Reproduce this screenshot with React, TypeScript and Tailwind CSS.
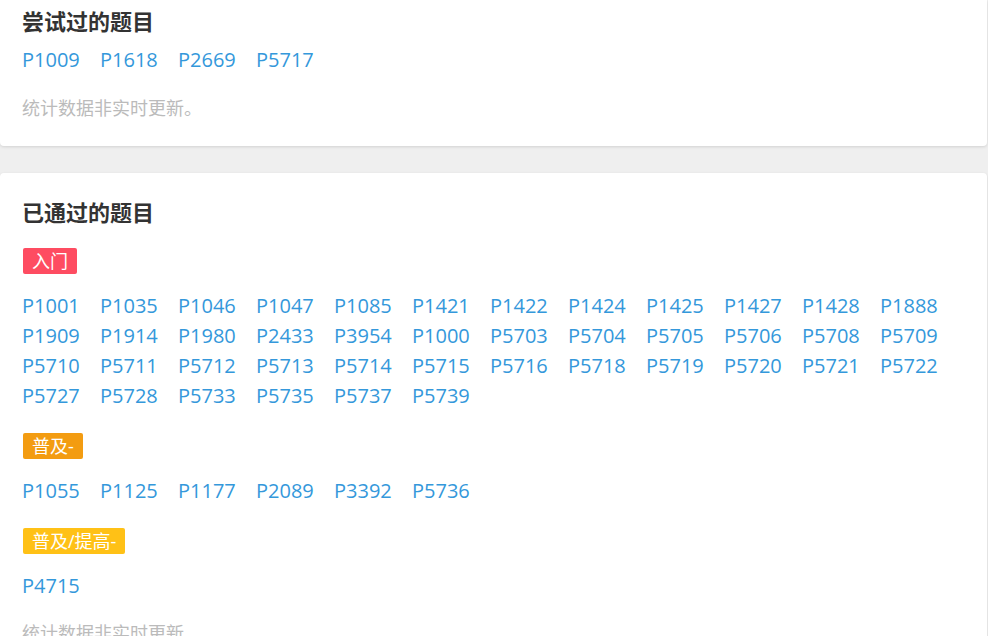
const font = { fontFamily: '"Open Sans", "Noto Sans CJK SC", sans-serif' }

const tried = ['P1009', 'P1618', 'P2669', 'P5717']

const passed = [
  {
    label: '入门',
    color: 'bg-[#fe4c61]',
    items: [
      'P1001', 'P1035', 'P1046', 'P1047', 'P1085', 'P1421', 'P1422', 'P1424', 'P1425', 'P1427', 'P1428', 'P1888',
      'P1909', 'P1914', 'P1980', 'P2433', 'P3954', 'P1000', 'P5703', 'P5704', 'P5705', 'P5706', 'P5708', 'P5709',
      'P5710', 'P5711', 'P5712', 'P5713', 'P5714', 'P5715', 'P5716', 'P5718', 'P5719', 'P5720', 'P5721', 'P5722',
      'P5727', 'P5728', 'P5733', 'P5735', 'P5737', 'P5739',
    ],
  },
  {
    label: '普及-',
    color: 'bg-[#f39c11]',
    items: ['P1055', 'P1125', 'P1177', 'P2089', 'P3392', 'P5736'],
  },
  {
    label: '普及/提高-',
    color: 'bg-[#ffc116]',
    items: ['P4715'],
  },
]

function ProblemList({ items }: { items: string[] }) {
  return (
    <div className="flex flex-wrap">
      {items.map((pid) => (
        <a key={pid} href="#" className="w-[78px] text-[20px] leading-[30px] text-[#3498db]">
          {pid}
        </a>
      ))}
    </div>
  )
}

function Note() {
  return <p className="text-[18px] leading-[24px] text-[#bbbbbb]">统计数据非实时更新。</p>
}

export default function App() {
  return (
    <div className="min-h-screen bg-[#efefef] pr-[1px]" style={font}>
      <div className="flex flex-col gap-[27px]">
        {/* Tried */}
        <div className="rounded-b-[4px] bg-white px-[22px] pt-[6px] pb-[26px] shadow-[0_1px_3px_rgba(0,0,0,0.12)]">
          <h3 className="text-[22px] leading-[30px] font-bold text-[#333]">尝试过的题目</h3>
          <div className="mt-[9px]">
            <ProblemList items={tried} />
          </div>
          <div className="mt-[21px]">
            <Note />
          </div>
        </div>

        {/* Passed */}
        <div className="rounded-[4px] bg-white px-[22px] pt-[24px] pb-[26px] shadow-[0_1px_3px_rgba(0,0,0,0.12)]">
          <h3 className="text-[22px] leading-[30px] font-bold text-[#333]">已通过的题目</h3>
          <div className="mt-[21px] flex flex-col gap-[22px]">
            {passed.map((group) => (
              <div key={group.label} className="flex flex-col gap-[17px]">
                <div>
                  <span className={`ml-[1px] inline-block rounded-[2px] px-[9px] text-[18px] leading-[26px] text-white ${group.color}`}>
                    {group.label}
                  </span>
                </div>
                <ProblemList items={group.items} />
              </div>
            ))}
          </div>
          <div className="mt-[20px]">
            <Note />
          </div>
        </div>
      </div>
    </div>
  )
}
